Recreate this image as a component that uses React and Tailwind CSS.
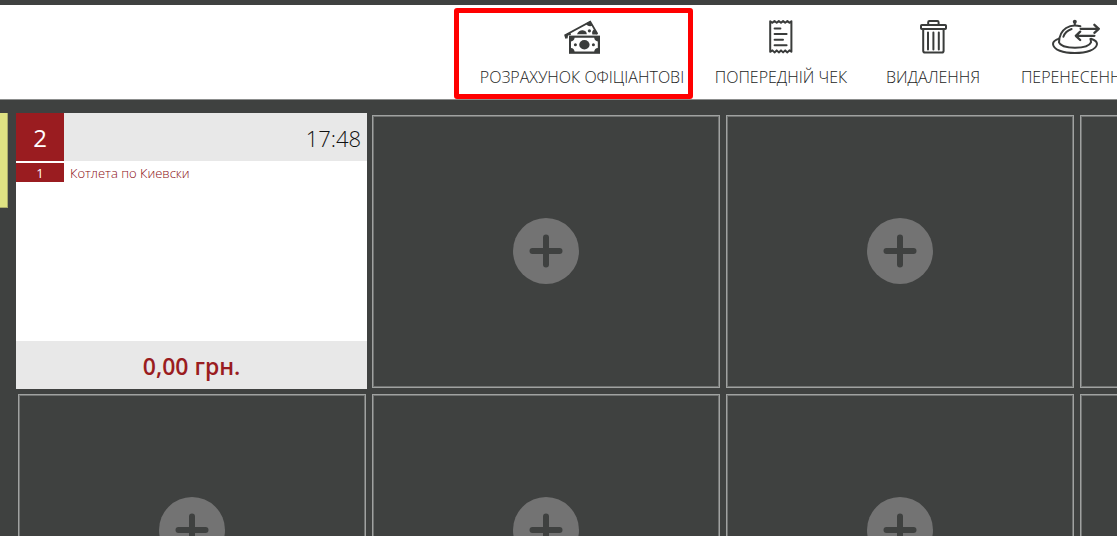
import React, { useState } from 'react';

const MoneyIcon = () => (
  <svg viewBox="0 0 48 36" className="w-12 h-9" fill="none" stroke="currentColor" aria-hidden="true">
    <path d="M8.2 19.5 7.2 16.2 32.2 2.6 39.4 15" strokeWidth="1.8" />
    <path d="M27.6 4.6 32.2 2.2 34.6 6.6C32 7.8 29 7 27.6 4.6Z" fill="currentColor" stroke="none" />
    <path d="M36.2 10.2 39.6 15.4H34.4C33.6 13.4 34.4 11.2 36.2 10.2Z" fill="currentColor" stroke="none" />
    <path d="M7.4 16 11.8 13.6C13 14.6 13 15.4 12.8 16L10 16.6 9.6 19.6 8.4 19Z" fill="currentColor" stroke="none" />
    <path d="M19 15.2C20 12.4 22.4 11 24.8 11.2 27.4 11.4 28.8 13 28.8 15.2Z" fill="currentColor" stroke="none" />
    <circle cx="31.4" cy="11.8" r="1.6" fill="currentColor" stroke="none" />
    <rect x="11" y="16.6" width="31" height="18.2" fill="currentColor" stroke="none" />
    <path
      d="M16.6 18.8H36.2C36.4 20.8 37.8 22.2 39.8 22.4V29C37.8 29.2 36.4 30.6 36.2 32.6H16.6C16.4 30.6 15 29.2 13 29V22.4C15 22.2 16.4 20.8 16.6 18.8Z"
      fill="#fff"
      stroke="none"
    />
    <ellipse cx="26.4" cy="25.7" rx="5.2" ry="4.7" fill="currentColor" stroke="none" />
    <circle cx="17.4" cy="25.7" r="1.5" fill="currentColor" stroke="none" />
    <circle cx="35.4" cy="25.7" r="1.5" fill="currentColor" stroke="none" />
  </svg>
);

const ReceiptIcon = () => (
  <svg viewBox="0 0 48 36" className="w-12 h-9" fill="none" stroke="currentColor" strokeLinecap="round" strokeLinejoin="round" aria-hidden="true">
    <path
      d="M13.2 2.2 15.4 3.8 17.5 2 19.7 3.8 21.8 2 24 3.8 26.1 2 28.2 3.8 30.4 2 32.4 3.8 34.4 2.2V32.8L32.4 31.4 30.4 33.4 28.2 31.4 26.1 33.4 24 31.4 21.8 33.4 19.7 31.4 17.5 33.4 15.4 31.4 13.2 32.8Z"
      strokeWidth="2"
    />
    <path d="M17.6 9.4H23.4M17.6 15H29.6M17.6 20.7H26M17.6 26.3H29.6" strokeWidth="2" />
  </svg>
);

const TrashIcon = () => (
  <svg viewBox="0 0 48 36" className="w-12 h-9" fill="none" stroke="currentColor" strokeLinejoin="round" aria-hidden="true">
    <path d="M19.2 5.6V3.2Q19.2 2 20.4 2H28.4Q29.6 2 29.6 3.2V5.6" strokeWidth="2" />
    <rect x="12" y="6" width="25" height="4" rx="0.8" strokeWidth="2" />
    <path d="M14.2 10V31.8Q14.2 33.6 16 33.6H33Q34.6 33.6 34.6 31.8V10" strokeWidth="2" />
    <path d="M19 13.6V30.4M24.4 13.6V30.4M29.8 13.6V30.4" strokeWidth="2" strokeLinecap="round" />
  </svg>
);

const TransferIcon = () => (
  <svg viewBox="0 0 48 36" className="w-12 h-9" fill="none" stroke="currentColor" strokeLinecap="round" strokeLinejoin="round" aria-hidden="true">
    <circle cx="22.8" cy="2.8" r="2" fill="currentColor" stroke="none" />
    <path d="M22.8 3V6" strokeWidth="2" />
    <path d="M28.4 7.2C18.4 4.4 7.4 9.4 7 23.4C9.6 30.4 36 30.6 39 23.4C39 22.2 38.8 21 38.4 20" strokeWidth="2" />
    <path d="M7 19.6C2.6 21 1 23.2 1 25C1.4 31 11.4 34 22.8 34S44.4 31 45 25C45 23.2 43.4 21.2 39 19.8" strokeWidth="2" />
    <path d="M11.4 17.8C12.6 14 15.4 11.4 19.6 10" strokeWidth="2" />
    <path d="M28.6 9.8H46.6M42.4 5.8 46.8 9.8 42.4 13.8" strokeWidth="2.3" />
    <path d="M42.4 16.8H23.8M28.2 12.6 23.8 16.8 28.2 21" strokeWidth="2.3" />
  </svg>
);

const actions = [
  { id: 'payment', label: 'РОЗРАХУНОК ОФІЦІАНТОВІ', icon: MoneyIcon, width: 'w-[230px]' },
  { id: 'precheck', label: 'ПОПЕРЕДНІЙ ЧЕК', icon: ReceiptIcon, width: 'w-[168px]' },
  { id: 'remove', label: 'ВИДАЛЕННЯ', icon: TrashIcon, width: 'w-[136px]' },
  { id: 'transfer', label: 'ПЕРЕНЕСЕННЯ', icon: TransferIcon, width: 'w-[150px]' },
];

const order = {
  number: 2,
  time: '17:48',
  items: [{ id: 1, quantity: 1, name: 'Котлета по Киевски' }],
  total: '0,00 грн.',
};

const emptySlots = [1, 2, 3, 4, 5, 6, 7];

const ActionButton = ({ action, active, onClick }) => {
  const Icon = action.icon;
  return (
    <button
      type="button"
      onClick={onClick}
      className={`relative shrink-0 flex flex-col items-center gap-2.5 pt-3.5 pb-2.5 text-[#3a3c3b] ${action.width}`}
    >
      <Icon />
      <span className="text-[16px] leading-6 font-light text-[#222423] whitespace-nowrap">{action.label}</span>
      {active && (
        <span className="absolute -left-[13px] right-1 top-[3px] bottom-0 border-5 border-[#ff0000] rounded-[3px]" />
      )}
    </button>
  );
};

const OrderCard = ({ order }) => (
  <article className="-mt-0.5 -ml-0.5 -mr-px -mb-px flex flex-col bg-white text-[#9a1c20]">
    <header className="flex h-12 bg-[#e8e8e8]">
      <span className="w-12 pt-0.5 flex items-center justify-center bg-[#9a1c20] text-white text-2xl">
        {order.number}
      </span>
      <time className="flex-1 pt-0.5 flex items-center justify-end pr-1.5 text-[22px] font-light text-[#111]">
        {order.time}
      </time>
    </header>
    <ul className="flex-1 pt-0.5">
      {order.items.map((item) => (
        <li key={item.id} className="flex h-[19px] text-[13px] leading-[19px]">
          <span className="w-12 pt-px text-center bg-[#9a1c20] text-white">{item.quantity}</span>
          <span className="pl-1.5 pt-px font-light text-[#8a0c12]">{item.name}</span>
        </li>
      ))}
    </ul>
    <footer className="h-12 pt-0.5 flex items-center justify-center bg-[#e8e8e8] text-[23px] font-semibold">
      {order.total}
    </footer>
  </article>
);

const EmptySlot = () => (
  <button
    type="button"
    aria-label="+"
    className="flex items-center justify-center pb-0.5 border border-[#a0a2a1] inset-ring inset-ring-[#717372]"
  >
    <svg viewBox="0 0 66 66" className="size-[66px]" aria-hidden="true">
      <circle cx="33" cy="33" r="33" fill="#737373" />
      <path d="M33 19.5V46.5M19.5 33H46.5" stroke="#3f4140" strokeWidth="6" strokeLinecap="round" />
    </svg>
  </button>
);

const App = () => {
  const [activeAction, setActiveAction] = useState('payment');

  return (
    <div className="h-screen overflow-hidden flex flex-col bg-[#3f4140] font-['Open_Sans',sans-serif]">
      <nav className="shrink-0 flex justify-end overflow-hidden bg-white border-t-5 border-t-[#3f4140] border-b border-b-[#8c8e8d]">
        <div className="flex -mr-[34px]">
          {actions.map((action) => (
            <ActionButton
              key={action.id}
              action={action}
              active={activeAction === action.id}
              onClick={() => setActiveAction(action.id)}
            />
          ))}
        </div>
      </nav>

      <main className="flex-1 min-h-0 flex">
        {/* edge of the neighbouring table list */}
        <aside className="w-2 shrink-0 pt-[13px]">
          <div className="h-[95px] bg-[#dfe283] border-r border-b border-[#a9ab6b]" />
        </aside>
        <section className="flex-1 min-w-0 ml-2.5 pt-[15px] grid grid-cols-[repeat(4,31.68%)] auto-rows-[273px] gap-1.5">
          <OrderCard order={order} />
          {emptySlots.map((slot) => (
            <EmptySlot key={slot} />
          ))}
        </section>
      </main>
    </div>
  );
};

export default App;
